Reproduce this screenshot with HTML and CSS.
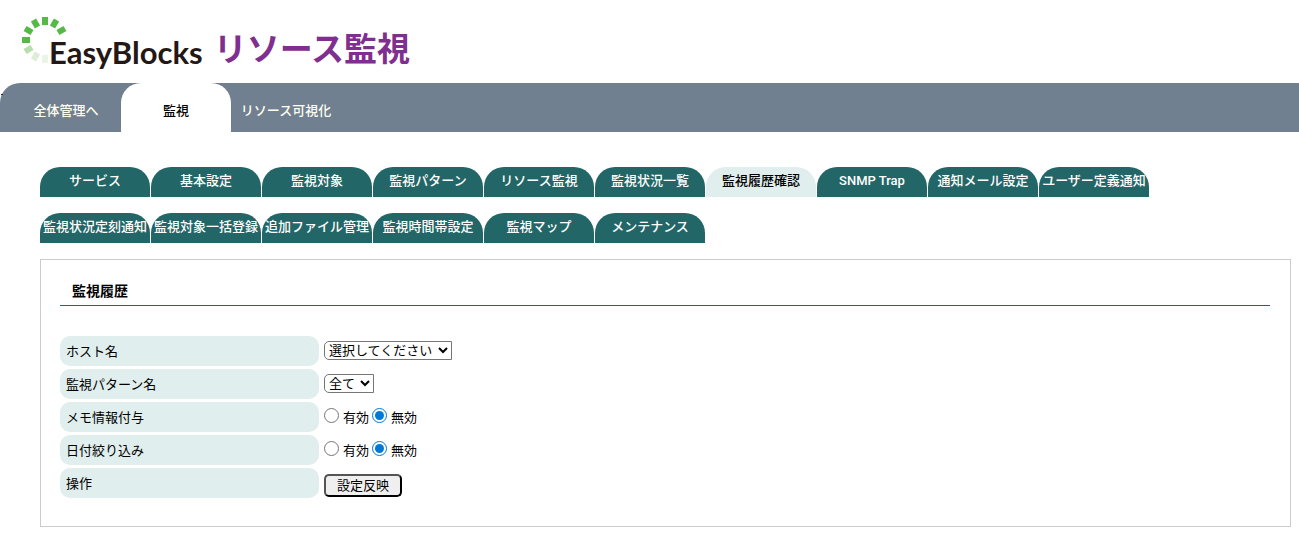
FILE: index.html
```html
<!DOCTYPE html>
<html lang="ja">
<head>
<meta charset="utf-8">
<title>EasyBlocks リソース監視</title>
<link rel="stylesheet" href="styles.css">
</head>
<body>
<header class="site-header">
  <svg class="logo-mark" width="46" height="48" viewBox="0 0 46 48" aria-hidden="true">
    <g fill="#56b947">
      <rect x="20" y="0" width="6" height="8"/>
      <rect x="20" y="0" width="6" height="8" transform="rotate(30 23 23)"/>
      <rect x="20" y="0" width="6" height="8" transform="rotate(60 23 23)"/>
      <rect x="20" y="0" width="6" height="8" transform="rotate(-30 23 23)"/>
      <rect x="20" y="0" width="6" height="8" transform="rotate(-60 23 23)"/>
      <rect x="20" y="0" width="6" height="8" transform="rotate(-90 23 23)"/>
    </g>
    <rect x="20" y="0" width="6" height="8" fill="#b9deae" transform="rotate(-120 23 23)"/>
    <rect x="20" y="0" width="6" height="8" fill="#dcefd6" transform="rotate(-150 23 23)"/>
    <rect x="20" y="0" width="6" height="8" fill="#eaf5e7" transform="rotate(180 23 23)"/>
  </svg>
  <h1 class="logo-text"><span class="logo-brand">EasyBlocks</span><span class="logo-product">リソース監視</span></h1>
</header>

<nav class="main-nav">
  <a class="main-tab" href="#">全体管理へ</a>
  <a class="main-tab main-tab-active" href="#">監視</a>
  <a class="main-tab" href="#">リソース可視化</a>
</nav>

<main class="content">
  <nav class="sub-nav">
    <a class="sub-tab" href="#">サービス</a>
    <a class="sub-tab" href="#">基本設定</a>
    <a class="sub-tab" href="#">監視対象</a>
    <a class="sub-tab" href="#">監視パターン</a>
    <a class="sub-tab" href="#">リソース監視</a>
    <a class="sub-tab" href="#">監視状況一覧</a>
    <a class="sub-tab sub-tab-active" href="#">監視履歴確認</a>
    <a class="sub-tab" href="#">SNMP Trap</a>
    <a class="sub-tab" href="#">通知メール設定</a>
    <a class="sub-tab" href="#">ユーザー定義通知</a>
    <a class="sub-tab" href="#">監視状況定刻通知</a>
    <a class="sub-tab" href="#">監視対象一括登録</a>
    <a class="sub-tab" href="#">追加ファイル管理</a>
    <a class="sub-tab" href="#">監視時間帯設定</a>
    <a class="sub-tab" href="#">監視マップ</a>
    <a class="sub-tab" href="#">メンテナンス</a>
  </nav>

  <section class="panel">
    <h2 class="panel-title">監視履歴</h2>
    <form class="settings">
      <label class="field-name" for="host">ホスト名</label>
      <div class="field field-select"><select class="select" id="host"><option>選択してください</option></select></div>

      <label class="field-name" for="pattern">監視パターン名</label>
      <div class="field field-select"><select class="select" id="pattern"><option>全て</option></select></div>

      <div class="field-name" id="memo-name">メモ情報付与</div>
      <div class="field" role="radiogroup" aria-labelledby="memo-name">
        <label class="choice"><input class="radio" type="radio" name="memo">有効</label>
        <label class="choice"><input class="radio" type="radio" name="memo" checked>無効</label>
      </div>

      <div class="field-name" id="date-name">日付絞り込み</div>
      <div class="field" role="radiogroup" aria-labelledby="date-name">
        <label class="choice"><input class="radio" type="radio" name="date">有効</label>
        <label class="choice"><input class="radio" type="radio" name="date" checked>無効</label>
      </div>

      <div class="field-name">操作</div>
      <div class="field field-action"><button class="button" type="button">設定反映</button></div>
    </form>
  </section>
</main>
</body>
</html>
```

FILE: styles.css
```css
* {
  box-sizing: border-box;
}

body {
  margin: 0;
  background: #fff;
  color: #000;
  font: 13px/20px Roboto, "Noto Sans CJK JP", sans-serif;
}

.site-header {
  display: flex;
  align-items: flex-start;
  height: 83px;
  padding: 17px 22px 0;
}

.logo-mark {
  flex: none;
}

.logo-text {
  display: flex;
  align-items: flex-start;
  gap: 11px;
  margin: 8px 0 0 -19px;
  font-weight: 700;
  white-space: nowrap;
}

.logo-brand {
  color: #231815;
  font-family: Lato, sans-serif;
  font-size: 31px;
  line-height: 54px;
}

.logo-product {
  color: #7f308e;
  font-family: "Noto Sans CJK JP", sans-serif;
  font-size: 33px;
  line-height: 44px;
}

.main-nav {
  position: relative;
  display: flex;
  height: 49px;
  padding-left: 11px;
  background: #708090;
  border-top-left-radius: 20px;
}

.main-nav::before {
  content: "";
  position: absolute;
  top: 11px;
  left: 1px;
  width: 2px;
  height: 1px;
  background: #222;
}

.main-tab {
  width: 110px;
  padding-top: 18px;
  border-radius: 20px 20px 0 0;
  color: ivory;
  font-weight: 500;
  text-align: center;
  text-decoration: none;
}

.main-tab-active {
  background: #fff;
  color: #000;
}

.content {
  padding: 35px 8px 9px 40px;
}

.sub-nav {
  display: flex;
  flex-wrap: wrap;
  gap: 16px 1px;
  padding-right: 100px;
}

.sub-tab {
  width: 110px;
  height: 30px;
  padding-top: 4px;
  border-radius: 20px 20px 0 0;
  background: #236667;
  color: #fff;
  font-weight: 500;
  text-align: center;
  text-decoration: none;
  white-space: nowrap;
}

.sub-tab-active {
  background: #e0eeed;
  color: #000;
}

.panel {
  margin-top: 16px;
  padding: 20px 20px 28px 19px;
  border: 1px solid #ccc;
}

.panel-title {
  margin: 0;
  padding: 0 12px 3px;
  border-bottom: 1px solid #236667;
  font-size: 14px;
  font-weight: 700;
  line-height: 22px;
}

.settings {
  display: grid;
  grid-template-columns: 259px 1fr;
  gap: 3px 5px;
  margin-top: 30px;
}

.field-name {
  padding: 6px 6px 4px;
  border-radius: 10px;
  background: #e0eeed;
}

.field {
  display: flex;
  align-items: flex-end;
  gap: 3px;
  padding-bottom: 4px;
}

.field-select {
  padding-bottom: 6px;
}

.field-action {
  padding-bottom: 1px;
}

.select {
  height: 19px;
  padding: 0 1px 0 0;
  border: 1px solid #767676;
  border-radius: 5px 0 0 5px;
  background: #fff;
  color: #000;
  font: inherit;
}

.choice {
  display: flex;
  gap: 4px;
}

.radio {
  width: 15px;
  height: 15px;
  margin: 0;
  accent-color: #0078d7;
}

.button {
  height: 23px;
  padding: 0 11px;
  border: 2px outset #000;
  border-radius: 5px;
  background: #efefef;
  color: #000;
  font: inherit;
}
```
